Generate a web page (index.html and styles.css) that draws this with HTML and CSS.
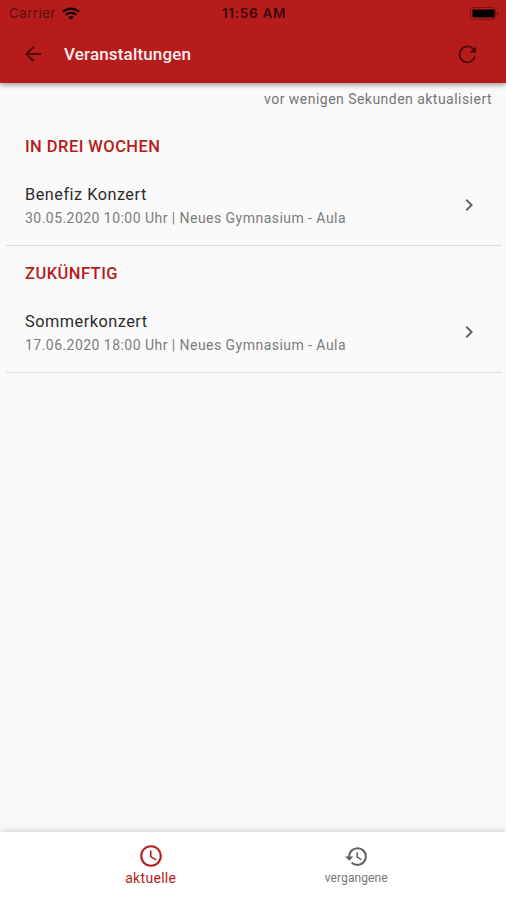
FILE: index.html
```html
<!DOCTYPE html>
<html lang="de">
<head>
<meta charset="utf-8">
<title>Veranstaltungen</title>
<link rel="stylesheet" href="styles.css">
</head>
<body>
<header class="header">
  <div class="status">
    <div class="carrier"><span>Carrier</span>
      <svg class="wifi" viewBox="0 0 18 13" fill="none" stroke="currentColor" stroke-width="2.2"><path d="M1 4.8a11.5 11.5 0 0 1 16 0M3.8 7.9a7.5 7.5 0 0 1 10.4 0"/><path d="M9 12.8 6.4 10.2a3.8 3.8 0 0 1 5.2 0z" fill="currentColor" stroke="none"/></svg>
    </div>
    <span class="time">11:56 AM</span>
    <svg class="battery" viewBox="0 0 29 13"><rect x=".5" y=".5" width="25" height="12" rx="3" fill="none" stroke="#000" stroke-opacity=".3"/><rect x="2.5" y="2.5" width="22" height="8" rx="1" fill="#000"/><path d="M27 4.2q2.6 2.3 0 4.6z" fill-opacity=".45"/></svg>
  </div>
  <div class="appbar">
    <svg class="icon" viewBox="0 0 24 24"><path d="M20 11H7.83l5.59-5.59L12 4l-8 8 8 8 1.41-1.41L7.83 13H20v-2z"/></svg>
    <h1 class="title">Veranstaltungen</h1>
    <svg class="refresh" viewBox="0 0 24 24"><path d="M19.2 14.2A7.6 7.6 0 1 1 17.6 6.8L19 8.2" fill="none" stroke="currentColor" stroke-width="1.7"/><path d="M20.3 4v6.3H14z" fill="currentColor"/></svg>
  </div>
</header>
<main class="content">
  <p class="updated">vor wenigen Sekunden aktualisiert</p>
  <section class="group">
    <h2 class="group-title">IN DREI WOCHEN</h2>
    <div class="event">
      <div><div class="name">Benefiz Konzert</div><div class="meta">30.05.2020 10:00 Uhr | Neues Gymnasium - Aula</div></div>
      <svg class="chevron" viewBox="0 0 24 24"><path d="M10 6 8.59 7.41 13.17 12l-4.58 4.59L10 18l6-6z"/></svg>
    </div>
  </section>
  <section class="group">
    <h2 class="group-title">ZUKÜNFTIG</h2>
    <div class="event">
      <div><div class="name">Sommerkonzert</div><div class="meta">17.06.2020 18:00 Uhr | Neues Gymnasium - Aula</div></div>
      <svg class="chevron" viewBox="0 0 24 24"><path d="M10 6 8.59 7.41 13.17 12l-4.58 4.59L10 18l6-6z"/></svg>
    </div>
  </section>
</main>
<nav class="tabs">
  <div class="tab active">
    <svg viewBox="0 0 24 24"><path d="M11.99 2C6.47 2 2 6.48 2 12s4.47 10 9.99 10C17.52 22 22 17.52 22 12S17.52 2 11.99 2zM12 20c-4.42 0-8-3.58-8-8s3.58-8 8-8 8 3.58 8 8-3.58 8-8 8zm.5-13H11v6l5.25 3.15.75-1.23-4.5-2.67z"/></svg>
    <span>aktuelle</span>
  </div>
  <div class="tab">
    <svg viewBox="0 0 24 24"><path d="M13 3a9 9 0 0 0-9 9H1l3.89 3.89.07.14L9 12H6c0-3.87 3.13-7 7-7s7 3.13 7 7-3.13 7-7 7c-1.93 0-3.68-.79-4.94-2.06l-1.42 1.42A8.954 8.954 0 0 0 13 21a9 9 0 0 0 0-18zm-1 5v5l4.28 2.54.72-1.21-3.5-2.08V8H12z"/></svg>
    <span>vergangene</span>
  </div>
</nav>
</body>
</html>
```
FILE: styles.css
```css
* { box-sizing: border-box; }
body {
  margin: 0;
  height: 900px;
  display: flex;
  flex-direction: column;
  overflow: hidden;
  background: #fafafa;
  font-family: Roboto, sans-serif;
}
h1, h2, p { margin: 0; }
svg { display: block; flex: none; }
.header {
  height: 83px;
  flex: none;
  background: #b71c1c;
  box-shadow: 0 2px 5px rgba(0, 0, 0, .4);
}
.status {
  height: 27px;
  padding: 0 7px 0 9px;
  display: grid;
  grid-template-columns: 1fr auto 1fr;
  align-items: center;
  color: #3a0808;
  font: 13.5px/27px Inter, sans-serif;
}
.carrier { display: flex; align-items: center; gap: 6px; color: #5a0e0e; letter-spacing: .35px; }
.wifi { width: 18px; height: 13px; color: #160202; }
.time { font-weight: 600; font-size: 13.5px; letter-spacing: .7px; }
.battery { width: 29px; height: 13px; justify-self: end; }
.appbar { height: 55px; display: flex; align-items: center; padding: 0 26px 1px 21px; }
.icon { width: 24px; height: 24px; fill: #520c0c; }
.refresh { width: 25px; height: 25px; color: #4a0a0a; }
.title { flex: 1; margin-left: 19px; color: #fceeee; font-size: 17px; font-weight: 500; letter-spacing: .16px; }
.content { flex: 1; padding: 0 4px 0 6px; }
.updated {
  height: 33px;
  padding-right: 10px;
  text-align: right;
  color: #757575;
  font-size: 14px;
  line-height: 33px;
  letter-spacing: .47px;
}
.group { height: 127px; border-bottom: 1px solid #dcdcdc; }
.updated + .group { height: 130px; }
.group-title { padding: 19px 0 0 19px; color: #b71c1c; font-size: 16.5px; font-weight: 500; line-height: 24px; letter-spacing: .45px; }
.group + .group .group-title { padding-top: 16px; }
.event { margin-top: 20px; padding: 0 21px 0 19px; display: flex; justify-content: space-between; align-items: flex-start; }
.name { padding-top: 4px; color: #2b2b2b; font-size: 16.3px; line-height: 24px; letter-spacing: .5px; }
.meta { color: #7c7c7c; font-size: 14px; line-height: 23px; letter-spacing: .46px; }
.chevron { width: 24px; height: 24px; margin-top: 14px; fill: #626262; }
.tabs {
  height: 68px;
  flex: none;
  display: flex;
  padding: 0 47px 0 48px;
  background: #fff;
  box-shadow: 0 -1px 7px rgba(0, 0, 0, .17);
}
.tab { flex: 1; display: flex; flex-direction: column; align-items: center; color: #757575; font-size: 12px; line-height: 18px; padding-top: 12px; letter-spacing: .1px; }
.tab svg { width: 25px; height: 25px; fill: #5f5f5f; }
.tab.active { color: #b71c1c; font-size: 14px; padding-top: 11px; letter-spacing: .3px; }
.tab.active svg { width: 26px; height: 26px; fill: #b71c1c; }
```
